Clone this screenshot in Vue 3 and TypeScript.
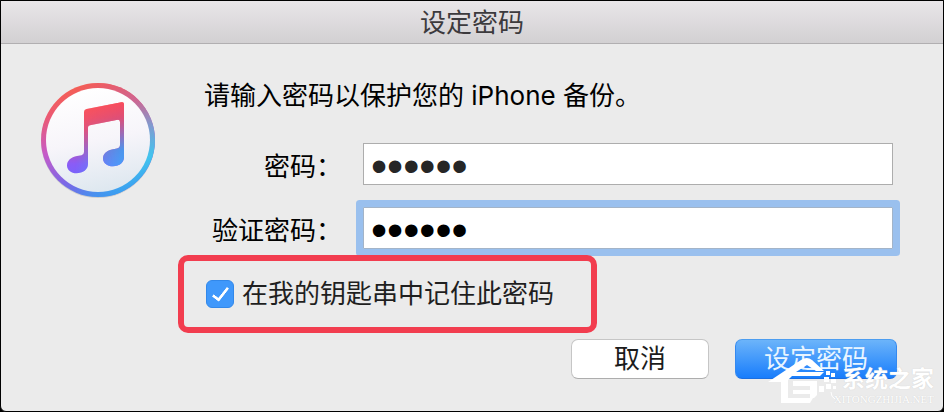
<script setup lang="ts">
import { ref } from 'vue'

const password = ref<string>('secret')
const confirmation = ref<string>('secret')
const remember = ref<boolean>(true)
</script>

<template>
  <main class="dialog">
    <header class="titlebar">
      <h1 class="title">设定密码</h1>
    </header>

    <form class="content" @submit.prevent>
      <svg class="app-icon" viewBox="0 0 116 116" aria-hidden="true">
        <defs>
          <linearGradient id="ring-warm" x1="0.3" y1="0" x2="0.6" y2="1">
            <stop offset="0" stop-color="#f6604f" />
            <stop offset="0.2" stop-color="#ec5a72" />
            <stop offset="0.5" stop-color="#c65bc8" />
            <stop offset="0.78" stop-color="#7c68e6" />
            <stop offset="1" stop-color="#4589f0" />
          </linearGradient>
          <linearGradient id="ring-cool" x1="0.35" y1="0" x2="0.6" y2="1">
            <stop offset="0" stop-color="#ee5a60" />
            <stop offset="0.25" stop-color="#cf6590" />
            <stop offset="0.5" stop-color="#7f9bd0" />
            <stop offset="0.75" stop-color="#41c4ee" />
            <stop offset="1" stop-color="#3b9df0" />
          </linearGradient>
          <linearGradient id="blend" x1="0.3" y1="0" x2="0.7" y2="0">
            <stop offset="0" stop-color="#000" />
            <stop offset="1" stop-color="#fff" />
          </linearGradient>
          <mask id="blend-mask" maskUnits="userSpaceOnUse" x="0" y="0" width="116" height="116">
            <rect width="116" height="116" fill="url(#blend)" />
          </mask>
          <linearGradient id="face" x1="0.4" y1="0" x2="0.6" y2="1">
            <stop offset="0" stop-color="#ffffff" />
            <stop offset="0.5" stop-color="#f7f5fa" />
            <stop offset="1" stop-color="#dde7ef" />
          </linearGradient>
          <linearGradient id="note-left" x1="0" y1="24" x2="0" y2="92" gradientUnits="userSpaceOnUse">
            <stop offset="0" stop-color="#ff5656" />
            <stop offset="0.35" stop-color="#ee4f73" />
            <stop offset="0.65" stop-color="#b357c0" />
            <stop offset="0.85" stop-color="#8b5cf6" />
            <stop offset="1" stop-color="#7a63fb" />
          </linearGradient>
          <linearGradient id="note-right" x1="0" y1="20" x2="0" y2="84" gradientUnits="userSpaceOnUse">
            <stop offset="0" stop-color="#f94b5c" />
            <stop offset="0.25" stop-color="#dc4f78" />
            <stop offset="0.5" stop-color="#9a6cb8" />
            <stop offset="0.75" stop-color="#4d94ec" />
            <stop offset="1" stop-color="#4a9cf8" />
          </linearGradient>
          <path
            id="note"
            d="M44 30 Q44 27.500 46.500 27 L81.500 20.300 Q84 19.800 84 22.500 V75 C84 80.500 79.500 84.300 73 84.300 C67 84.300 63 81 63 76.500 C63 72 66.500 68.700 72 67.500 L77 66.500 Q80 65.900 80 63 V40 Q80 37.300 77.500 37.800 L50 43.300 Q48 43.700 48 45.500 V82 C48 87.500 43 91.300 36.500 91.300 C31 91.300 27 88 27 83.500 C27 78.500 31 75.300 37 74 L41.500 73.200 Q44 72.700 44 70 Z"
          />
        </defs>
        <circle cx="58" cy="59" r="57" fill="#000" opacity="0.12" />
        <circle cx="58" cy="58" r="57" fill="url(#ring-warm)" />
        <circle cx="58" cy="58" r="57" fill="url(#ring-cool)" mask="url(#blend-mask)" />
        <circle cx="58" cy="58" r="52" fill="url(#face)" />
        <use href="#note" fill="url(#note-left)" />
        <g mask="url(#blend-mask)">
          <use href="#note" fill="url(#note-right)" />
        </g>
      </svg>

      <div class="fields">
        <p class="message">请输入密码以保护您的 iPhone 备份。</p>
        <div class="row">
          <label class="label" for="password">密码：</label>
          <input id="password" v-model="password" class="input" type="password" />
        </div>
        <div class="row">
          <label class="label" for="confirmation">验证密码：</label>
          <input id="confirmation" v-model="confirmation" class="input active" type="password" />
        </div>
        <label class="remember">
          <input v-model="remember" class="check" type="checkbox" />
          <span>在我的钥匙串中记住此密码</span>
        </label>
      </div>

      <footer class="actions">
        <button class="button cancel" type="button">取消</button>
        <button class="button primary" type="submit">设定密码</button>
      </footer>
    </form>

    <div class="watermark">
      <svg class="mark" viewBox="0 0 72 50" aria-hidden="true">
        <g fill="#fff">
          <path d="M0 25 L33 3 Q39 -1 44 3 L56 14 H48 L39 8 L28 15 H56 L52 19 H24 L20 23 V41 H45 L42 46 H13 V25 Z" />
          <path d="M25 24 H49 V38 L46 41 H42 V29 H25 Z" />
          <path d="M25 33 H43 V37 H25 Z" />
          <path d="M58 14 h4 v4 h-4z M63 16 h4 v4 h-4z M56 20 h5 v5 h-5z M63 22 h5 v4 h-5z M51 29 h5 v6 h-5z M58 27 h5 v5 h-5z M65 29 h3 v3 h-3z" />
          <path d="M63 35 q0 5 4 7" fill="none" stroke="#fff" />
        </g>
      </svg>
      <div class="brand">
        <span class="brand-name">系统之家</span>
        <span class="brand-site">XITONGZHIJIA.NET</span>
      </div>
    </div>
  </main>
</template>

<style>
body {
  background: #000;
}
</style>

<style scoped>
.dialog {
  position: relative;
  box-sizing: border-box;
  min-height: 100vh;
  border: 1px solid #000;
  border-radius: 0 0 6px 6px;
  background: #ebebeb;
  color: #000;
  font-family: Inter, "Noto Sans CJK SC", sans-serif;
  font-size: 26px;
  line-height: 32px;
}

.titlebar {
  display: flex;
  justify-content: center;
  padding: 6px 0 4px;
  border-bottom: 1px solid #b1afb1;
  background: linear-gradient(#e9e6e9, #d2d0d2);
}

.title {
  margin: 0;
  color: #3c3a3d;
  font-size: 26px;
  font-weight: 400;
}

.content {
  display: grid;
  grid-template-columns: 116px 1fr;
  column-gap: 48px;
  padding: 36px 50px 24px 39px;
}

.app-icon {
  width: 116px;
  height: 116px;
  margin-top: 2px;
}

.fields {
  display: flex;
  flex-direction: column;
  gap: 22px;
}

.message {
  margin: 0 0 9px;
}

.row {
  display: grid;
  grid-template-columns: 138px 1fr;
  column-gap: 21px;
  align-items: center;
}

.label {
  padding-top: 6px;
  text-align: right;
}

.input {
  box-sizing: border-box;
  width: 100%;
  min-width: 0;
  height: 42px;
  padding: 4px 7px 0;
  border: 1px solid #adadad;
  border-radius: 0;
  outline: none;
  background: #fff;
  color: #262626;
  font-family: "Liberation Sans", sans-serif;
  font-size: 46px;
  line-height: 40px;
}

.input.active {
  color: #000;
  box-shadow: 0 0 0 7px #9ac0ee;
  border-color: #a3b4c8;
  border-radius: 1px;
}

.remember {
  position: relative;
  display: flex;
  align-items: center;
  align-self: flex-start;
  gap: 8px;
  margin: -16px 0 0 -26px;
  padding: 17px 37px 17px 22px;
  border: 6px solid #f23d4f;
  border-radius: 10px;
  color: #1f1f1f;
}

.check {
  display: grid;
  place-items: center;
  width: 28px;
  height: 28px;
  margin: 0;
  border: 1px solid #3288ea;
  border-radius: 6px;
  background: #fff;
  appearance: none;
}

.check:checked {
  background: #3f98fb;
}

.check:checked::before {
  width: 6px;
  height: 14px;
  margin-bottom: 3px;
  border: solid #fff;
  border-width: 0 3px 3px 0;
  border-radius: 1px;
  content: "";
  transform: rotate(38deg);
}

.actions {
  display: flex;
  grid-column: 1 / -1;
  justify-content: flex-end;
  gap: 26px;
  margin: 6px -4px 0 0;
}

.button {
  height: 40px;
  padding: 0 28px;
  border: 1px solid #c6c6c6;
  border-bottom-color: #adadad;
  border-radius: 7px;
  background: #fff;
  color: #1c1c1c;
  font: inherit;
}

.cancel {
  padding: 0 42px;
}

.primary {
  border-color: #4c9df0 #3489f0 #1c6fe0;
  background: linear-gradient(#6cb4fa, #187dfc);
  color: #e9f5ff;
}

.watermark {
  position: absolute;
  right: 9px;
  bottom: 4px;
  display: flex;
  align-items: flex-end;
  color: #fff;
  pointer-events: none;
}

.mark {
  width: 72px;
  height: 50px;
}

.brand {
  display: flex;
  flex-direction: column;
  align-items: flex-end;
  margin-left: -6px;
  text-shadow: 0 0 1px #c8c8c8;
}

.brand-name {
  font-size: 23px;
  font-weight: 700;
  line-height: 24px;
}

.brand-site {
  font-family: "Liberation Serif", serif;
  font-size: 11px;
  line-height: 16px;
}
</style>
